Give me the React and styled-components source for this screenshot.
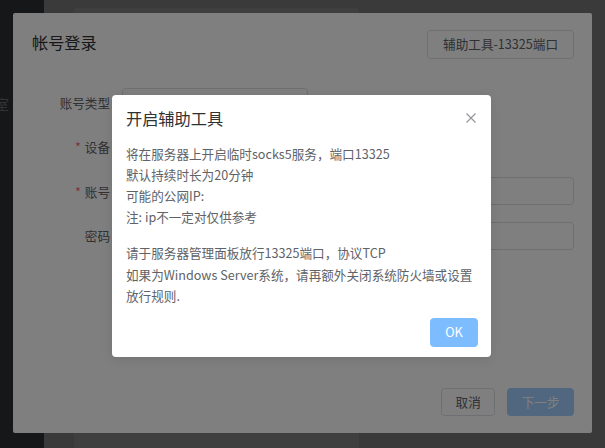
import React from "react";
import styled, { createGlobalStyle } from "styled-components";

const GlobalStyle = createGlobalStyle`
  html, body { margin: 0; padding: 0; width: 605px; height: 448px; overflow: hidden; }
  body { font-family: "Noto Sans CJK SC", "Noto Sans", sans-serif; -webkit-font-smoothing: antialiased; }
  * { box-sizing: border-box; }
`;

const Page = styled.div`
  position: relative;
  width: 605px;
  height: 448px;
  display: flex;
  overflow: hidden;
  background: #e9e9e9;
`;

const Sidebar = styled.aside`
  width: 44px;
  flex: none;
  background: #545c64;
  padding-top: 95px;
  overflow: hidden;
`;

const MenuItem = styled.div`
  margin-left: -19px;
  font-size: 14px;
  line-height: 18px;
  color: #c8ccd2;
  white-space: nowrap;
`;

const Main = styled.main`
  flex: 1;
  padding: 7px 0 0 29px;
  display: flex;
`;

const Card = styled.section`
  width: 287px;
  background: #ffffff;
  border: 1px solid #e4e4e4;
  border-bottom: none;
  border-radius: 4px 4px 0 0;
`;

const Overlay = styled.div`
  position: absolute;
  inset: 0;
  background: rgba(0, 0, 0, 0.5);
  z-index: ${(p) => p.$z};
`;

const DialogLayer = styled.div`
  position: absolute;
  inset: 0;
  z-index: 2;
  display: flex;
  justify-content: center;
  align-items: flex-start;
  padding-top: 13px;
`;

const Dialog = styled.div`
  width: 579px;
  height: 420px;
  background: #ffffff;
  border-radius: 2px;
  display: flex;
  flex-direction: column;
`;

const DialogHeader = styled.header`
  display: flex;
  justify-content: space-between;
  align-items: flex-start;
  padding: 17px 18px 0 19px;
`;

const DialogTitle = styled.h2`
  margin: 0;
  font-size: 16.2px;
  line-height: 24px;
  font-weight: 400;
  color: #303133;
`;

const Button = styled.button`
  height: ${(p) => p.$h || 28}px;
  min-width: ${(p) => p.$minW || 0}px;
  padding: 0 ${(p) => p.$px || 13.5}px;
  font-family: inherit;
  font-size: 12.6px;
  line-height: 1;
  border-radius: 3.6px;
  border: 1px solid ${(p) => (p.$variant === "primary" ? "#a0cfff" : p.$variant === "ok" ? "#7dbdff" : "#dcdfe6")};
  background: ${(p) => (p.$variant === "primary" ? "#a0cfff" : p.$variant === "ok" ? "#7dbdff" : "#ffffff")};
  color: ${(p) => (p.$variant ? "#ffffff" : "#606266")};
  white-space: nowrap;
  cursor: pointer;
`;

const Form = styled.form`
  margin-top: 29px;
  padding: 0 18px 0 19px;
  display: flex;
  flex-direction: column;
  gap: 16.67px;
`;

const FormRow = styled.div`
  display: flex;
  align-items: center;
  height: 28px;
`;

const Label = styled.label`
  width: 90px;
  flex: none;
  padding-right: 12px;
  text-align: right;
  font-size: 12.6px;
  color: #606266;
`;

const Required = styled.span`
  color: #f56c6c;
  margin-right: 4px;
`;

const Field = styled.div`
  height: 28px;
  width: ${(p) => (p.$w ? `${p.$w}px` : "auto")};
  flex: ${(p) => (p.$w ? "none" : "1")};
  border: 1px solid #dcdfe6;
  border-radius: 3.6px;
  background: #ffffff;
  padding-left: 28px;
  font-size: 12.6px;
  line-height: 26px;
  color: #606266;
`;

const DialogFooter = styled.footer`
  margin-top: auto;
  display: flex;
  justify-content: flex-end;
  gap: 12px;
  padding: 0 18px 17px;
`;

const MessageLayer = styled.div`
  position: absolute;
  inset: 0;
  z-index: 4;
  display: flex;
  justify-content: center;
  align-items: center;
  padding-top: 4px;
  padding-right: 2px;
`;

const MessageBox = styled.div`
  width: 379px;
  background: #ffffff;
  border-radius: 4px;
  box-shadow: 0 2px 12px rgba(0, 0, 0, 0.1);
  padding-bottom: 10px;
`;

const MessageHeader = styled.div`
  display: flex;
  justify-content: space-between;
  align-items: center;
  padding: 15px 15px 0 14px;
`;

const MessageTitle = styled.div`
  font-size: 16.2px;
  line-height: 16px;
  color: #303133;
`;

const CloseButton = styled.button`
  width: 10px;
  height: 10px;
  padding: 0;
  border: none;
  background: none;
  display: flex;
  color: #909399;
  cursor: pointer;
`;

const MessageContent = styled.div`
  padding: 16.5px 14px 0;
  display: flex;
  flex-direction: column;
  gap: 15px;
`;

const Paragraph = styled.p`
  margin: 0;
  font-size: 12.6px;
  line-height: 21.2px;
  color: #606266;
  white-space: nowrap;
`;

const MessageButtons = styled.div`
  display: flex;
  justify-content: flex-end;
  padding: 12px 13px 0;
`;

export default function App() {
  return (
    <>
      <GlobalStyle />
      <Page>
        <Sidebar>
          <MenuItem>管室</MenuItem>
        </Sidebar>
        <Main>
          <Card />
        </Main>
        <Overlay $z={1} />
        <DialogLayer>
          <Dialog>
            <DialogHeader>
              <DialogTitle>帐号登录</DialogTitle>
              <Button type="button" $h={29} $px={15}>辅助工具-13325端口</Button>
            </DialogHeader>
            <Form>
              <FormRow>
                <Label>账号类型</Label>
                <Field $w={186}>默认</Field>
              </FormRow>
              <FormRow>
                <Label><Required>*</Required>设备</Label>
                <Field $w={186} />
              </FormRow>
              <FormRow>
                <Label><Required>*</Required>账号</Label>
                <Field />
              </FormRow>
              <FormRow>
                <Label>密码</Label>
                <Field />
              </FormRow>
            </Form>
            <DialogFooter>
              <Button type="button">取消</Button>
              <Button type="button" $variant="primary">下一步</Button>
            </DialogFooter>
          </Dialog>
        </DialogLayer>
        <Overlay $z={3} />
        <MessageLayer>
          <MessageBox>
            <MessageHeader>
              <MessageTitle>开启辅助工具</MessageTitle>
              <CloseButton type="button" aria-label="关闭">
                <svg width="10" height="10" viewBox="0 0 10 10">
                  <path d="M0.5 0.5 L9.5 9.5 M9.5 0.5 L0.5 9.5" stroke="currentColor" strokeWidth="1.1" fill="none" />
                </svg>
              </CloseButton>
            </MessageHeader>
            <MessageContent>
              <Paragraph>
                将在服务器上开启临时socks5服务，端口13325<br />
                默认持续时长为20分钟<br />
                可能的公网IP:<br />
                注: ip不一定对仅供参考
              </Paragraph>
              <Paragraph>
                请于服务器管理面板放行13325端口，协议TCP<br />
                如果为Windows Server系统，请再额外关闭系统防火墙或设置<br />
                放行规则.
              </Paragraph>
            </MessageContent>
            <MessageButtons>
              <Button type="button" $variant="ok" $h={29} $px={0} $minW={48}>OK</Button>
            </MessageButtons>
          </MessageBox>
        </MessageLayer>
      </Page>
    </>
  );
}
